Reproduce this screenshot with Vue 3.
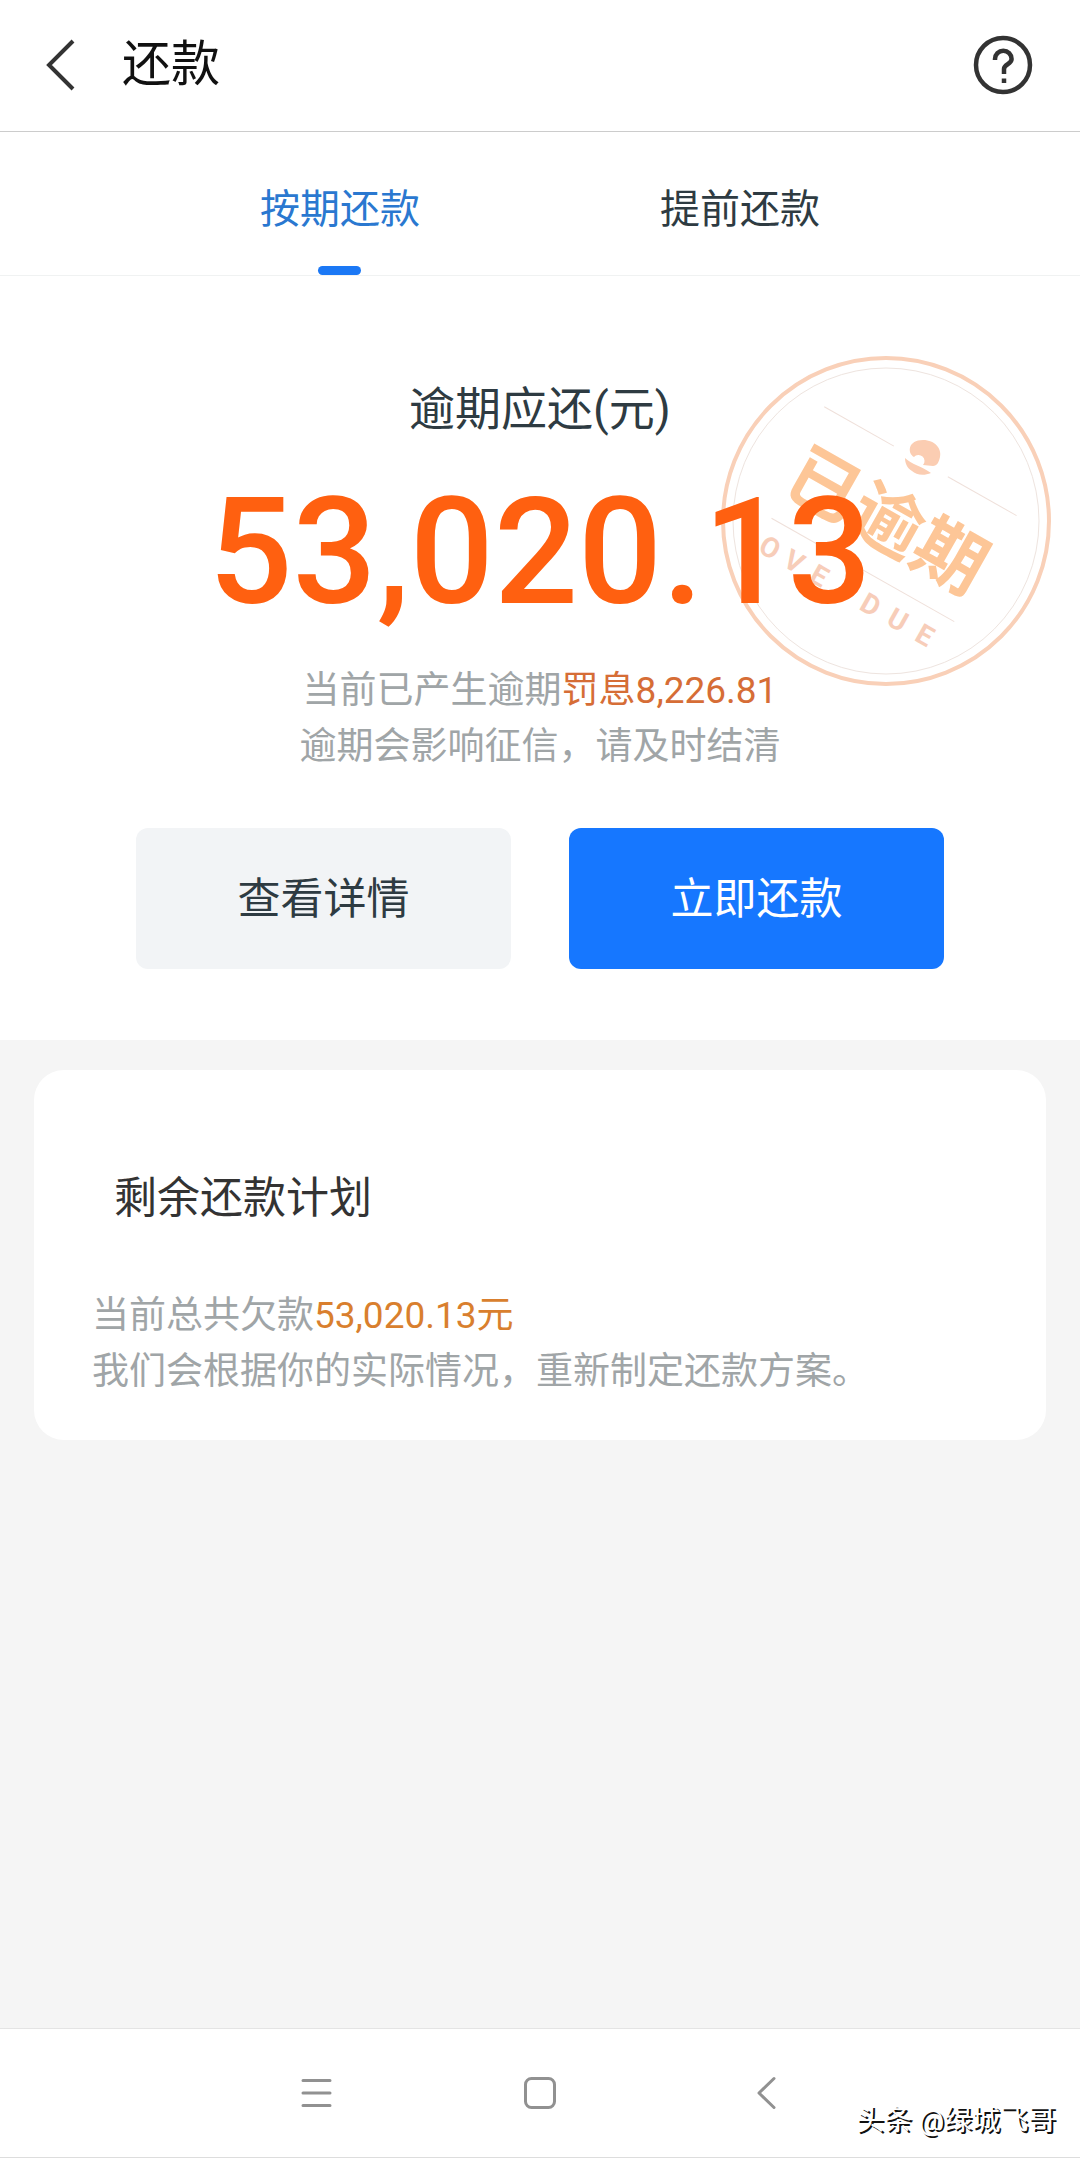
<script setup>
import { ref } from 'vue'

const tabs = ['按期还款', '提前还款']
const active = ref(0)
</script>

<template>
  <div class="page">
    <header class="header">
      <button class="icon-btn" aria-label="返回">
        <svg width="32" height="52" viewBox="0 0 32 52" fill="none" stroke="#333" stroke-width="4">
          <path d="M29 2 L5 26 L29 50" />
        </svg>
      </button>
      <h1 class="title">还款</h1>
      <button class="icon-btn help" aria-label="帮助">
        <svg width="60" height="60" viewBox="0 0 60 60" fill="none" stroke="#333" stroke-width="4.500">
          <circle cx="30" cy="30" r="27" />
          <path d="M22 25 V24 a8.300 8.300 0 0 1 16.600 0 c0 5.500 -7.600 5 -7.600 10 v5" />
          <path d="M31 43.500 v4.500" />
        </svg>
      </button>
    </header>

    <nav class="tabs">
      <button
        v-for="(tab, i) in tabs"
        :key="tab"
        class="tab"
        :class="{ active: active === i }"
        @click="active = i"
      >
        {{ tab }}
      </button>
    </nav>

    <section class="summary">
      <svg class="stamp" width="332" height="332" viewBox="-166 -166 332 332" aria-label="已逾期">
        <circle r="163" fill="none" stroke="#f9d0b8" stroke-width="4" />
        <circle r="153" fill="none" stroke="#eee4df" stroke-width="1" />
        <g fill="#fbcdb2">
          <path d="M28 -64 C21 -68 22 -81 37 -81 C49 -81 56 -72 54 -64 C53 -59 51 -55 47 -55 L37 -56 A5.500 5.500 0 1 0 28 -64 Z" />
          <path d="M19 -63 C26 -56 36 -55 45 -48 C38 -45 30 -46 26 -50 C21 -53 19 -58 19 -63 Z" />
        </g>
        <g transform="rotate(29.500)">
          <g stroke="#efe0da" stroke-width="1">
            <path d="M-110 -69 H-30" />
            <path d="M32 -69 H111" />
            <path d="M-101 54 H109" />
          </g>
          <text class="stamp-main" x="1" y="25" text-anchor="middle">已逾期</text>
          <g class="stamp-sub" text-anchor="middle">
            <text x="-88" y="90">O</text>
            <text x="-60" y="90">V</text>
            <text x="-31" y="90">E</text>
            <text x="28" y="90">D</text>
            <text x="59" y="90">U</text>
            <text x="90" y="90">E</text>
          </g>
        </g>
      </svg>
      <h2 class="label">逾期应还(元)</h2>
      <p class="amount">53,020.13</p>
      <p class="note">
        当前已产生逾期<span class="penalty">罚息8,226.81</span><br />
        逾期会影响征信，请及时结清
      </p>
      <div class="actions">
        <button class="btn">查看详情</button>
        <button class="btn primary">立即还款</button>
      </div>
    </section>

    <main class="body">
      <section class="card">
        <h2 class="card-title">剩余还款计划</h2>
        <p class="note">
          当前总共欠款<span class="debt">53,020.13元</span><br />
          我们会根据你的实际情况，重新制定还款方案。
        </p>
      </section>
    </main>

    <footer class="sysbar">
      <button class="icon-btn" aria-label="菜单">
        <svg width="36" height="36" viewBox="0 0 36 36" stroke="#919191" stroke-width="3" stroke-linecap="round">
          <path d="M6 5.500 H33 M6 18 H33 M6 30.500 H33" />
        </svg>
      </button>
      <button class="icon-btn" aria-label="主页">
        <svg width="36" height="36" viewBox="0 0 36 36" fill="none" stroke="#919191" stroke-width="3">
          <rect x="3.500" y="3.500" width="29" height="29" rx="6" />
        </svg>
      </button>
      <button class="icon-btn" aria-label="后退">
        <svg width="36" height="36" viewBox="0 0 36 36" fill="none" stroke="#919191" stroke-width="3" stroke-linecap="round" stroke-linejoin="round">
          <path d="M27 3.500 L12 18 L27 32.500" />
        </svg>
      </button>
      <span class="watermark">头条 @绿城飞哥</span>
    </footer>
  </div>
</template>

<style>
body {
  margin: 0;
}
</style>

<style scoped>
.page {
  display: flex;
  flex-direction: column;
  min-height: 100vh;
  background: #fff;
  color: #2e3b42;
  font-family: Roboto, "Noto Sans CJK SC", sans-serif;
}
h1,
h2,
p {
  margin: 0;
  font-weight: 400;
}
button {
  padding: 0;
  border: 0;
  background: none;
  color: inherit;
  font-family: inherit;
  cursor: pointer;
}
.icon-btn {
  display: flex;
}
.header {
  display: flex;
  align-items: center;
  height: 130px;
  padding: 0 47px 1px 44px;
  border-bottom: 1px solid #ccc;
}
.title {
  margin-left: 46px;
  color: #111;
  font-size: 49px;
  line-height: 64px;
}
.help {
  margin-left: auto;
}
.tabs {
  display: flex;
  justify-content: center;
  height: 143px;
  padding: 0 140px;
  border-bottom: 1px solid #f0f2f2;
}
.tab {
  position: relative;
  flex: 1;
  padding-top: 4px;
  font-size: 40px;
}
.tab.active {
  color: #2a78d0;
}
.tab.active::after {
  content: "";
  position: absolute;
  left: 50%;
  bottom: 0;
  width: 43px;
  height: 9px;
  margin-left: -22px;
  border-radius: 5px;
  background: #1b78f5;
}
.summary {
  position: relative;
  display: flex;
  flex-direction: column;
  align-items: center;
  padding: 99px 0 71px;
}
.label {
  font-size: 46px;
  line-height: 68px;
}
.amount {
  position: relative;
  color: #ff6010;
  font-size: 148px;
  font-weight: 500;
  line-height: 180px;
  margin-top: 20px;
}
.stamp {
  position: absolute;
  top: 79px;
  right: 28px;
}
.stamp-main {
  fill: #fdc697;
  font-size: 72px;
  font-weight: 700;
}
.stamp-sub {
  fill: #f7cdb9;
  font-family: "Liberation Sans Narrow", Roboto, sans-serif;
  font-size: 28px;
  font-weight: 700;
}
.note {
  color: #a0a5a7;
  font-size: 37px;
  line-height: 56px;
}
.summary .note {
  margin-top: 20px;
  text-align: center;
}
.penalty {
  color: #d66d36;
}
.debt {
  color: #d97f2e;
}
.actions {
  display: flex;
  gap: 58px;
  align-self: stretch;
  margin-top: 53px;
  padding: 0 136px;
}
.btn {
  flex: 1;
  height: 141px;
  padding-bottom: 8px;
  border-radius: 12px;
  background: #f2f4f6;
  font-size: 43px;
}
.btn.primary {
  background: #1677ff;
  color: #fff;
}
.body {
  flex: 1;
  padding: 30px 34px;
  background: #f5f5f5;
}
.card {
  padding: 96px 58px 40px;
  border-radius: 30px;
  background: #fff;
}
.card-title {
  margin: 0 0 58px 22px;
  color: #333;
  font-size: 43px;
  line-height: 64px;
}
.sysbar {
  position: relative;
  display: flex;
  align-items: center;
  justify-content: center;
  gap: 189px;
  height: 128px;
  border-top: 1px solid #e4e4e4;
  border-bottom: 1px solid #ddd;
}
.watermark {
  position: absolute;
  right: 24px;
  bottom: 16px;
  color: #fff;
  font-size: 28px;
  line-height: 40px;
  text-shadow: 2px 2px 0 #111;
}
</style>
